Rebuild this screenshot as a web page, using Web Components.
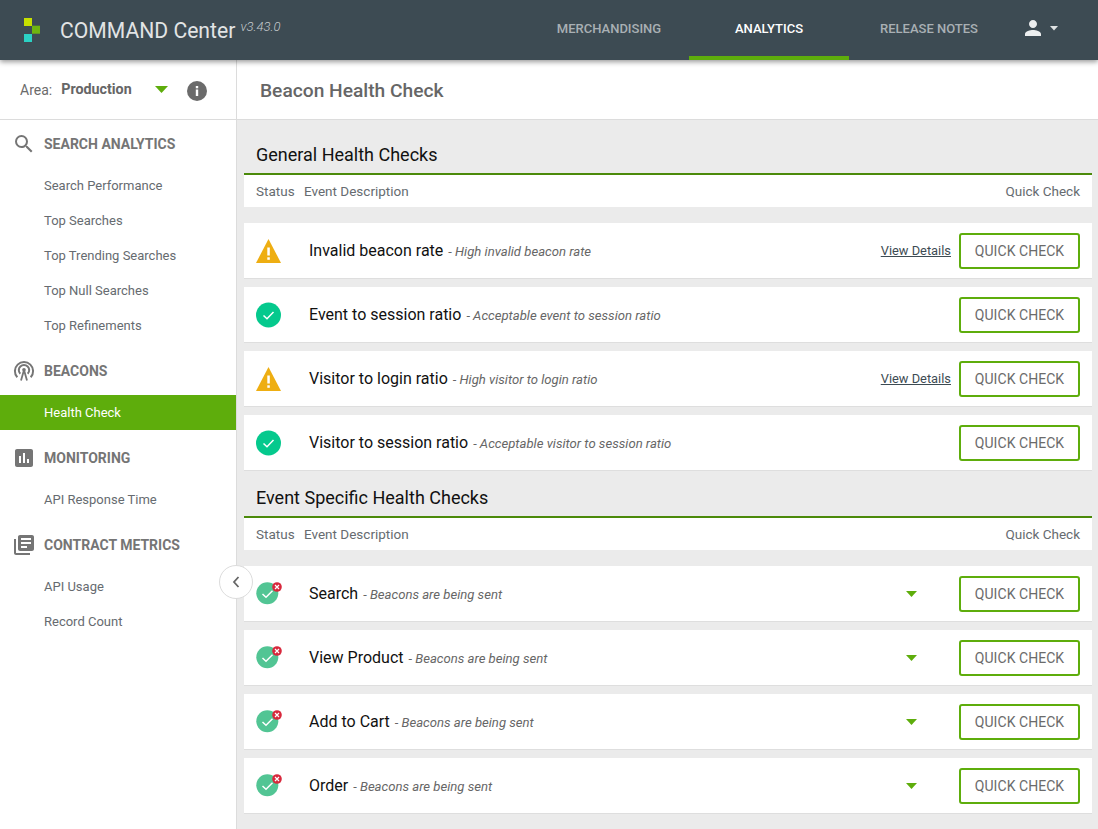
<!DOCTYPE html>
<html><head><meta charset="utf-8">
<style>
html,body{margin:0;height:100%;overflow:hidden}
body{font-family:Roboto,"Liberation Sans",sans-serif;background:#fff}
</style></head><body>
<cc-app></cc-app>
<script>
const tpl=(css,html)=>{const t=document.createElement('template');t.innerHTML=`<style>${css}</style>${html}`;return t;};
function def(name,css,html,init){
  const t=tpl(css,html);
  customElements.define(name,class extends HTMLElement{
    connectedCallback(){ if(this.shadowRoot) return; const r=this.attachShadow({mode:'open'}); const f=t.content.cloneNode(true); if(init) init(this,f); r.appendChild(f);}
  });
}
const ICONS={
 search:`<svg width="24" height="24" viewBox="0 0 24 24"><path fill="#757575" d="M15.500 14h-.79l-.28-.27A6.470 6.470 0 0 0 16 9.500 6.500 6.500 0 1 0 9.500 16c1.610 0 3.090-.59 4.230-1.570l.27.28v.79l5 4.990L20.490 19l-4.990-5zm-6 0C7.010 14 5 11.990 5 9.500S7.010 5 9.500 5 14 7.010 14 9.500 11.990 14 9.500 14z"/></svg>`,
 beacon:`<svg width="24" height="24" viewBox="0 0 24 24" fill="none" stroke="#757575" stroke-width="2"><path d="M5.300 18.300a9.100 9.100 0 1 1 13.400 0"/><path d="M8.300 14.800a5.200 5.200 0 1 1 7.400 0"/><circle cx="12" cy="10.800" r="1.800" fill="#757575" stroke="none"/><path d="M12 11l-3 10.500M12 11l3 10.500" stroke-width="1.800"/></svg>`,
 chart:`<svg width="24" height="24" viewBox="0 0 24 24"><path fill="#757575" d="M19 3H5c-1.100 0-2 .9-2 2v14c0 1.100.9 2 2 2h14c1.100 0 2-.9 2-2V5c0-1.100-.9-2-2-2zM9 17H7v-7h2v7zm4 0h-2V7h2v10zm4 0h-2v-4h2v4z"/></svg>`,
 lib:`<svg width="24" height="24" viewBox="0 0 24 24"><path fill="#757575" d="M4 6H2v14c0 1.100.9 2 2 2h14v-2H4V6zm16-4H8c-1.100 0-2 .9-2 2v12c0 1.100.9 2 2 2h12c1.100 0 2-.9 2-2V4c0-1.100-.9-2-2-2zm-1 9H9V9h10v2zm-4 4H9v-2h6v2zm4-8H9V5h10v2z"/></svg>`
};
def('cc-logo',`:host{display:block;width:16px;height:24px}`,
`<svg width="16" height="24" viewBox="0 0 16 24"><rect x="0" y="0" width="8" height="8" fill="#c6e000"/><rect x="8" y="7.700" width="8" height="8" fill="#6fb510"/><rect x="0" y="16" width="8" height="8" fill="#2bd1c4"/></svg>`);
def('cc-nav-item',`:host{display:flex;align-items:center;justify-content:center;height:60px;box-sizing:border-box;font:500 13px/1 Roboto,sans-serif;color:#a9b0b4;padding-bottom:4px;position:relative}
:host([active]){color:#fff;font-weight:500}
:host([active])::after{content:"";position:absolute;left:0;right:0;bottom:0;height:4px;background:#5ead0c}`,`<slot></slot>`);
def('cc-header',`:host{display:flex;align-items:center;height:60px;background:#3d4b53;box-shadow:0 2px 5px rgba(0,0,0,.4);position:relative;z-index:3;flex:none}
.logo{margin-left:24px}
.t{margin-left:20px;font:400 21.150px/1 Roboto,sans-serif;color:#e2e4e5;white-space:nowrap;padding-top:2px}
.v{font:italic 300 13px/1 Roboto,sans-serif;color:#c5cacd;position:relative;top:-7px;margin-left:2px}
nav{display:flex;margin-left:auto;align-items:center}
cc-nav-item{width:160px}
.user{display:flex;align-items:center;width:89px;box-sizing:border-box;padding-left:12px;gap:4px;padding-bottom:4px}`,
`<cc-logo class="logo"></cc-logo><span class="t">COMMAND Center<span class="v"> v3.43.0</span></span>
<nav><cc-nav-item>MERCHANDISING</cc-nav-item><cc-nav-item active>ANALYTICS</cc-nav-item><cc-nav-item>RELEASE NOTES</cc-nav-item>
<div class="user"><svg width="24" height="24" viewBox="0 0 24 24"><path fill="#eceeef" d="M12 12c2.210 0 4-1.790 4-4s-1.790-4-4-4-4 1.790-4 4 1.790 4 4 4zm0 2c-2.670 0-8 1.340-8 4v2h16v-2c0-2.660-5.330-4-8-4z"/></svg><svg width="10" height="5" viewBox="0 0 10 5"><path d="M1 0h8L5 4.500z" fill="#dfe2e3"/></svg></div></nav>`);
def('cc-side-group',`:host{display:block}
.h{display:flex;align-items:center;box-sizing:border-box;height:52px;padding:4px 0 0 12px;gap:8px;font:700 14px/1 Roboto,sans-serif;color:#757575}
:host(:first-child) .h{height:48px;padding:0 0 0 12px}
.i{width:24px;height:24px;display:block}`,
`<div class="h"><span class="i"></span><span class="l"></span></div><slot></slot>`,
(el,r)=>{r.querySelector('.i').innerHTML=ICONS[el.getAttribute('icon')];r.querySelector('.l').textContent=el.getAttribute('label');});
def('cc-side-link',`:host{display:flex;align-items:center;height:35px;padding-left:44px;font:400 13px/1 Roboto,sans-serif;color:#666b70}
:host([active]){background:#5ead0c;color:#fff}`,`<slot></slot>`);
def('cc-area',`:host{display:flex;align-items:center;height:59px;border-bottom:1px solid #dcdcdc;padding-left:20px;font:400 14px/1 Roboto,sans-serif;color:#6b6b6b}
span{padding-top:1px}
b{font-weight:700;font-size:14.300px;margin-left:9px;color:#666;margin-top:-1px}
.c{margin-left:23px}
.info{margin-left:19px;width:20px;height:20px;display:block;margin-top:3px}`,
`<span>Area:</span><b>Production</b>
<svg class="c" width="13" height="7" viewBox="0 0 13 7"><path d="M0 0h13L6.500 7z" fill="#5ead0c"/></svg>
<svg class="info" viewBox="0 0 20 20"><circle cx="10" cy="10" r="10" fill="#6b6b6b"/><rect x="8.800" y="8.500" width="2.400" height="6.500" fill="#fff"/><rect x="8.800" y="5" width="2.400" height="2.300" fill="#fff"/></svg>`);
def('cc-sidebar',`:host{display:block;width:236px;flex:none;border-right:1px solid #dcdcdc;background:#fff;position:relative;z-index:2}
.toggle{position:absolute;right:-17px;top:505px;width:32px;height:32px;border-radius:50%;background:#fff;border:1px solid #dcdcdc;display:flex;align-items:center;justify-content:center}`,
`<cc-area></cc-area><div class="list">
<cc-side-group icon="search" label="SEARCH ANALYTICS"><cc-side-link>Search Performance</cc-side-link><cc-side-link>Top Searches</cc-side-link><cc-side-link>Top Trending Searches</cc-side-link><cc-side-link>Top Null Searches</cc-side-link><cc-side-link>Top Refinements</cc-side-link></cc-side-group>
<cc-side-group icon="beacon" label="BEACONS"><cc-side-link active>Health Check</cc-side-link></cc-side-group>
<cc-side-group icon="chart" label="MONITORING"><cc-side-link>API Response Time</cc-side-link></cc-side-group>
<cc-side-group icon="lib" label="CONTRACT METRICS"><cc-side-link>API Usage</cc-side-link><cc-side-link>Record Count</cc-side-link></cc-side-group>
</div>
<div class="toggle"><svg width="10" height="14" viewBox="0 0 10 14"><path d="M7.500 2L3 7l4.500 5" fill="none" stroke="#666" stroke-width="1.800"/></svg></div>`);
def('cc-status',`:host{display:block;width:26px;height:26px;position:relative}
svg{display:block}.x{position:absolute;left:16px;top:0}`,`<span></span>`,(el,r)=>{
  const k=el.getAttribute('kind');
  const s=r.querySelector('span');
  if(k==='warn') s.innerHTML=`<svg width="26" height="26" viewBox="0 0 26 26"><path d="M12.500 1L25 25H0z" fill="#eeae12"/><rect x="11.300" y="9.500" width="2.500" height="8" fill="#fff"/><rect x="11.300" y="19.300" width="2.500" height="2.500" fill="#fff"/></svg>`;
  else if(k==='ok') s.innerHTML=`<svg width="26" height="26" viewBox="0 0 26 26"><circle cx="12.500" cy="13" r="12.500" fill="#05c98d"/><path d="M7.500 13.500l3.500 3.300 6.500-6.800" fill="none" stroke="#fff" stroke-width="1.500"/></svg>`;
  else s.innerHTML=`<svg width="23" height="23" viewBox="0 0 23 23" style="margin-top:3px"><circle cx="11.300" cy="11.300" r="11" fill="#52c594"/><path d="M6.500 12l3.500 3.300 6.500-6.500" fill="none" stroke="#fff" stroke-width="1.500"/></svg><svg class="x" width="10" height="10" viewBox="0 0 10 10"><circle cx="5" cy="5" r="4.800" fill="#d8283c"/><path d="M3 3l4 4M7 3l-4 4" stroke="#fff" stroke-width="1.200"/></svg>`;
});
def('cc-button',`:host{display:flex;align-items:center;justify-content:center;box-sizing:border-box;width:121px;height:36px;border:2px solid #5ead0c;border-radius:3px;background:#fff;font:400 14px/1 Roboto,sans-serif;color:#6b6b6b;letter-spacing:.05px}`,`<slot></slot>`);
def('cc-row',`:host{display:flex;align-items:center;height:55px;background:#fff;border-bottom:1px solid #dedede;padding:0 12px;margin-bottom:8px}
.s{width:53px;flex:none}
.n{font:400 16px/1 Roboto,sans-serif;color:#111;white-space:nowrap}
.d{font:italic 400 13.120px/1 Roboto,sans-serif;color:#666;margin-left:5px;padding-top:2px;white-space:nowrap}
.sp{flex:1}
a{font:400 12.850px/1 Roboto,sans-serif;color:#3d4b53;text-decoration:underline;margin-right:8px;padding-top:2px;white-space:nowrap}
.c{margin-right:42px;display:block}`,
`<div class="s"><cc-status></cc-status></div><span class="n"></span><span class="d"></span><span class="sp"></span><span class="x" style="display:contents"></span><cc-button>QUICK CHECK</cc-button>`,
(el,r)=>{
  r.querySelector('cc-status').setAttribute('kind',el.getAttribute('kind'));
  r.querySelector('.n').textContent=el.getAttribute('name');
  r.querySelector('.d').textContent='- '+el.getAttribute('desc');
  const x=r.querySelector('.x');
  if(el.hasAttribute('details')) x.innerHTML='<a>View Details</a>';
  if(el.hasAttribute('caret')) x.innerHTML='<svg class="c" width="11" height="6" viewBox="0 0 11 6"><path d="M0 0h11L5.500 6z" fill="#5ead0c"/></svg>';
});
def('cc-section',`:host{display:block}
h2{margin:0;height:39px;box-sizing:border-box;padding:0 12px;font:400 18px/1 Roboto,sans-serif;color:#111;display:flex;align-items:center;border-bottom:2px solid #4b8a0a}
.head{display:flex;align-items:center;box-sizing:border-box;height:32px;background:#fff;padding:2px 12px 0;font:400 13.500px/1 Roboto,sans-serif;color:#666b70;margin-bottom:16px}
.head span:first-child{width:48px}.head span:last-child{margin-left:auto}`,
`<h2></h2><div class="head"><span>Status</span><span>Event Description</span><span>Quick Check</span></div><slot></slot>`,
(el,r)=>{r.querySelector('h2').textContent=el.getAttribute('title');});
def('cc-main',`:host{display:block;flex:1;background:#ebebeb;min-width:0}
.title{background:#fff;border-bottom:1px solid #dcdcdc;display:flex;align-items:center;padding-left:23px;padding-top:3px;height:56px;font:500 19.200px/1 Roboto,sans-serif;color:#666}
.body{padding:16px 6px 0 7px}`,
`<div class="title">Beacon Health Check</div><div class="body"><slot></slot></div>`);
def('cc-app',`:host{display:flex;flex-direction:column;height:829px;width:1098px;overflow:hidden}
.b{display:flex;flex:1;min-height:0}`,
`<cc-header></cc-header><div class="b"><cc-sidebar></cc-sidebar><cc-main>
<cc-section title="General Health Checks">
<cc-row kind="warn" name="Invalid beacon rate" desc="High invalid beacon rate" details></cc-row>
<cc-row kind="ok" name="Event to session ratio" desc="Acceptable event to session ratio"></cc-row>
<cc-row kind="warn" name="Visitor to login ratio" desc="High visitor to login ratio" details></cc-row>
<cc-row kind="ok" name="Visitor to session ratio" desc="Acceptable visitor to session ratio"></cc-row>
</cc-section>
<cc-section title="Event Specific Health Checks">
<cc-row kind="mixed" name="Search" desc="Beacons are being sent" caret></cc-row>
<cc-row kind="mixed" name="View Product" desc="Beacons are being sent" caret></cc-row>
<cc-row kind="mixed" name="Add to Cart" desc="Beacons are being sent" caret></cc-row>
<cc-row kind="mixed" name="Order" desc="Beacons are being sent" caret></cc-row>
</cc-section></cc-main></div>`);
</script></body></html>
